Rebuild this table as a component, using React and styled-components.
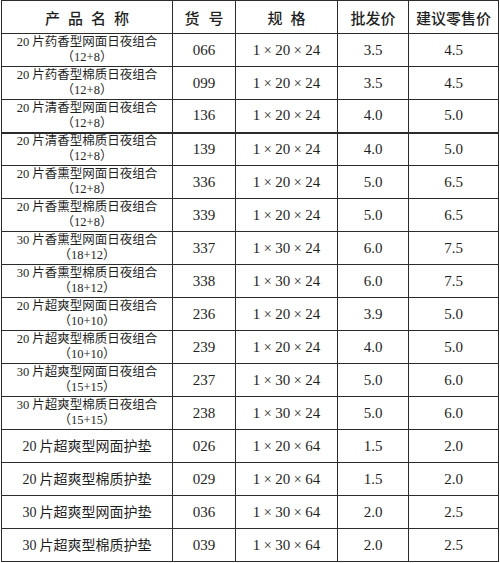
import React from 'react'
import styled, { createGlobalStyle } from 'styled-components'

const GlobalStyle = createGlobalStyle`
  html, body {
    margin: 0;
    padding: 0;
    background: #ffffff;
  }
`

const rows = [
  { name: '20片药香型网面日夜组合', pack: '（12+8）', code: '066', spec: [1, 20, 24], trade: '3.5', retail: '4.5' },
  { name: '20片药香型棉质日夜组合', pack: '（12+8）', code: '099', spec: [1, 20, 24], trade: '3.5', retail: '4.5' },
  { name: '20片清香型网面日夜组合', pack: '（12+8）', code: '136', spec: [1, 20, 24], trade: '4.0', retail: '5.0' },
  { name: '20片清香型棉质日夜组合', pack: '（12+8）', code: '139', spec: [1, 20, 24], trade: '4.0', retail: '5.0' },
  { name: '20片香熏型网面日夜组合', pack: '（12+8）', code: '336', spec: [1, 20, 24], trade: '5.0', retail: '6.5' },
  { name: '20片香熏型棉质日夜组合', pack: '（12+8）', code: '339', spec: [1, 20, 24], trade: '5.0', retail: '6.5' },
  { name: '30片香熏型网面日夜组合', pack: '（18+12）', code: '337', spec: [1, 30, 24], trade: '6.0', retail: '7.5' },
  { name: '30片香熏型棉质日夜组合', pack: '（18+12）', code: '338', spec: [1, 30, 24], trade: '6.0', retail: '7.5' },
  { name: '20片超爽型网面日夜组合', pack: '（10+10）', code: '236', spec: [1, 20, 24], trade: '3.9', retail: '5.0' },
  { name: '20片超爽型棉质日夜组合', pack: '（10+10）', code: '239', spec: [1, 20, 24], trade: '4.0', retail: '5.0' },
  { name: '30片超爽型网面日夜组合', pack: '（15+15）', code: '237', spec: [1, 30, 24], trade: '5.0', retail: '6.0' },
  { name: '30片超爽型棉质日夜组合', pack: '（15+15）', code: '238', spec: [1, 30, 24], trade: '5.0', retail: '6.0' },
  { name: '20片超爽型网面护垫', code: '026', spec: [1, 20, 64], trade: '1.5', retail: '2.0' },
  { name: '20片超爽型棉质护垫', code: '029', spec: [1, 20, 64], trade: '1.5', retail: '2.0' },
  { name: '30片超爽型网面护垫', code: '036', spec: [1, 30, 64], trade: '2.0', retail: '2.5' },
  { name: '30片超爽型棉质护垫', code: '039', spec: [1, 30, 64], trade: '2.0', retail: '2.5' },
]

const Page = styled.div`
  padding: 0 0 0 1px;
`

const Table = styled.table`
  width: 497px;
  border-collapse: collapse;
  table-layout: fixed;
  background: #ffffff;
  color: #1f1f1f;
  font-family: "Liberation Serif", "Noto Sans CJK SC", serif;
`

const Row = styled.tr`
  height: 33px;
`

const HeadCell = styled.th`
  border: 1px solid #2b2b2b;
  padding: 0;
  text-align: center;
  vertical-align: middle;
  font-family: "Noto Sans CJK SC", sans-serif;
  font-size: 15px;
  font-weight: 500;
  line-height: 1;
  letter-spacing: ${p => p.$spread || 0}px;
  text-indent: ${p => p.$spread || 0}px;
`

const Cell = styled.td`
  border: 1px solid #2b2b2b;
  border-top-width: ${p => (p.$thick ? 2 : 1)}px;
  padding: 0;
  text-align: center;
  vertical-align: middle;
  font-size: 15px;
  line-height: 1;
`

const NameCell = styled(Cell)`
  font-size: ${p => (p.$twoLine ? 12.5 : 14)}px;
  line-height: 15px;
`

const Line = styled.div`
  white-space: nowrap;
`

const Digits = styled.span`
  margin-right: 3px;
`

const Cross = styled.span`
  display: inline-block;
  width: 15px;
  text-align: center;
  font-size: 14px;
`

const Spec = ({ parts }) => (
  <>
    {parts[0]}
    <Cross>×</Cross>
    {parts[1]}
    <Cross>×</Cross>
    {parts[2]}
  </>
)

const ProductName = ({ name }) => {
  const m = name.match(/^(\d+)(.*)$/)
  return (
    <>
      <Digits>{m[1]}</Digits>
      {m[2]}
    </>
  )
}

export default function App() {
  return (
    <Page>
      <GlobalStyle />
      <Table>
        <colgroup>
          <col style={{ width: 171 }} />
          <col style={{ width: 63 }} />
          <col style={{ width: 102 }} />
          <col style={{ width: 71 }} />
          <col style={{ width: 90 }} />
        </colgroup>
        <thead>
          <Row>
            <HeadCell $spread={8}>产品名称</HeadCell>
            <HeadCell $spread={9}>货号</HeadCell>
            <HeadCell $spread={8}>规格</HeadCell>
            <HeadCell>批发价</HeadCell>
            <HeadCell>建议零售价</HeadCell>
          </Row>
        </thead>
        <tbody>
          {rows.map((r, i) => {
            const thick = i === 3
            return (
              <Row key={r.code}>
                <NameCell $twoLine={!!r.pack} $thick={thick}>
                  <Line>
                    <ProductName name={r.name} />
                  </Line>
                  {r.pack && <Line>{r.pack}</Line>}
                </NameCell>
                <Cell $thick={thick}>{r.code}</Cell>
                <Cell $thick={thick}>
                  <Spec parts={r.spec} />
                </Cell>
                <Cell $thick={thick}>{r.trade}</Cell>
                <Cell $thick={thick}>{r.retail}</Cell>
              </Row>
            )
          })}
        </tbody>
      </Table>
    </Page>
  )
}
